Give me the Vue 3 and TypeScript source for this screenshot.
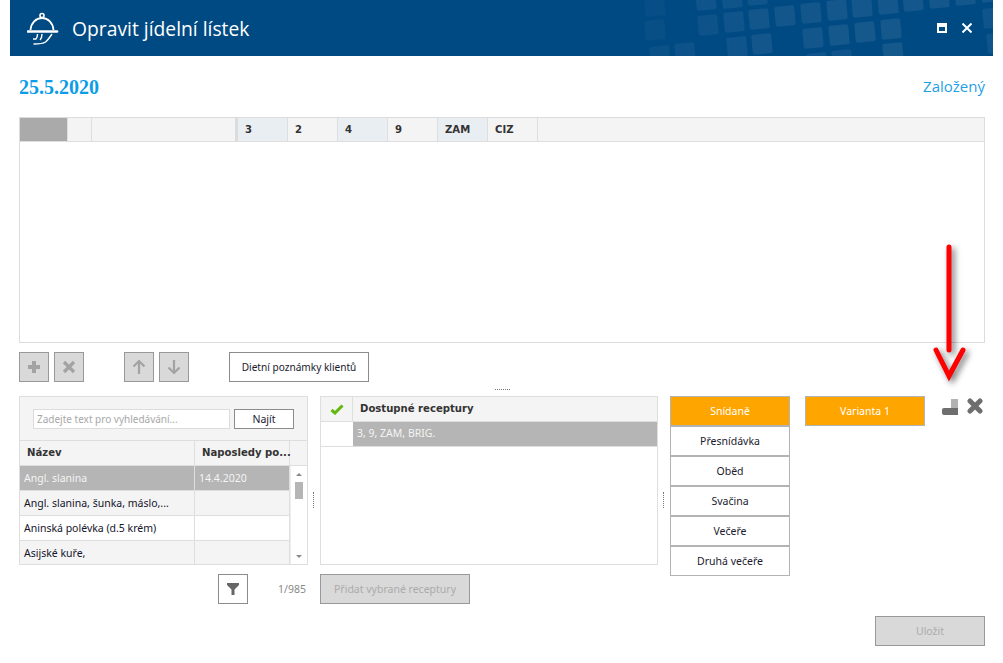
<script setup lang="ts">
interface Square { x: number; y: number; o: number }
const squares: Square[] = [
  [645,-4,.025],[645,20,.03],[650,46,.04],[675,43,.05],
  [696,-10,.06],[722,-12,.06],[747,-15,.06],
  [698,15,.05],[724,12,.06],[749,9,.07],[775,6,.07],[801,3,.07],[827,0,.075],
  [852,-3,.075],[878,-6,.075],[903,-9,.075],[929,-12,.075],[955,-15,.075],[981,-18,.075],
  [727,37,.06],[752,34,.07],[803,28,.07],[829,25,.08],[855,22,.08],[881,19,.08],
  [807,53,.06],[832,50,.06],[883,43,.08],[983,8,.06],[987,33,.06]
].map(([x, y, o]) => ({ x, y, o }))

const matrixCols = [
  { label: '3', tint: true }, { label: '2', tint: false }, { label: '4', tint: true },
  { label: '9', tint: false }, { label: 'ZAM', tint: true }, { label: 'CIZ', tint: false }
]
interface Row { name: string; date: string; cls: string }
const rows: Row[] = [
  { name: 'Angl. slanina', date: '14.4.2020', cls: 'selected' },
  { name: 'Angl. slanina, šunka, máslo,...', date: '', cls: 'alt' },
  { name: 'Aninská polévka (d.5 krém)', date: '', cls: '' },
  { name: 'Asijské kuře,', date: '', cls: 'alt' }
]
const meals = ['Snídaně', 'Přesnídávka', 'Oběd', 'Svačina', 'Večeře', 'Druhá večeře']
</script>

<template>
  <div class="page">
    <header class="titlebar">
      <svg class="bg" width="983" height="56" viewBox="10 0 983 56">
        <rect v-for="(s, i) in squares" :key="i" :x="s.x" :y="s.y" width="20" height="20" rx="2"
          fill="#fff" :fill-opacity="s.o" :transform="`rotate(-5 ${s.x + 10} ${s.y + 10})`" />
      </svg>
      <svg class="logo" width="32" height="34" viewBox="0 0 32 34" fill="none" stroke="#fff" stroke-width="1.6">
        <circle cx="15" cy="3.5" r="2" />
        <path d="M3.5 18C4 11 9 6 15 6s11 5 11.500 12" stroke-width="1.800" />
        <path d="M1 19.500h29" stroke-width="2.600" stroke-linecap="round" />
        <path d="M10.500 22c0 2-.5 4-1.500 5H6M15 22c0 2.500-.5 4.500-2 6M25 22c-2 3-4 6-6.500 8-2 1.500-7 2-12 2" stroke-width="1.400" />
      </svg>
      <h1 class="title">Opravit jídelní lístek</h1>
      <div class="winbtns">
        <svg width="10" height="10" viewBox="0 0 10 10"><path fill="#fff" fill-rule="evenodd" d="M0 0h10v10H0zM2 4v4h6V4z" /></svg>
        <svg width="10" height="10" viewBox="0 0 10 10"><path stroke="#fff" stroke-width="2" d="M.5.500l9 9M9.500.500l-9 9" /></svg>
      </div>
    </header>

    <main class="content">
      <div class="status">
        <span class="date">25.5.2020</span>
        <span class="state">Založený</span>
      </div>

      <section class="matrix">
        <div class="matrix-head">
          <div class="mh gray"></div>
          <div class="mh small"></div>
          <div class="mh wide"></div>
          <div v-for="c in matrixCols" :key="c.label" class="mh col" :class="{ tint: c.tint }">{{ c.label }}</div>
        </div>
      </section>

      <div class="toolbar">
        <button class="btn square disabled">
          <svg width="14" height="14" viewBox="0 0 14 14"><path fill="#a3a3a3" d="M5 1h4v4h4v4H9v4H5V9H1V5h4z" /></svg>
        </button>
        <button class="btn square disabled">
          <svg width="14" height="14" viewBox="0 0 14 14"><path stroke="#a3a3a3" stroke-width="3.200" d="M2 2l10 10M12 2L2 12" /></svg>
        </button>
        <button class="btn square disabled gap-big">
          <svg width="14" height="16" viewBox="0 0 14 16" fill="none"><path stroke="#a3a3a3" stroke-width="2.200" d="M7 15V2M1.500 7.500L7 2l5.500 5.500" /></svg>
        </button>
        <button class="btn square disabled">
          <svg width="14" height="16" viewBox="0 0 14 16" fill="none"><path stroke="#a3a3a3" stroke-width="2.200" d="M7 1v13M1.500 8.500L7 14l5.500-5.500" /></svg>
        </button>
        <button class="btn notes">Dietní poznámky klientů</button>
      </div>

      <div class="hsplit"><span></span></div>

      <div class="lower">
        <div class="left">
          <div class="panel search-panel">
            <div class="search">
              <div class="input">Zadejte text pro vyhledávání...</div>
              <button class="btn find">Najít</button>
            </div>
            <div class="thead">
              <div class="c-name">Název</div>
              <div class="c-date">Naposledy po...</div>
              <div class="c-sb"></div>
            </div>
            <div class="tbody">
              <div class="trows">
                <div v-for="r in rows" :key="r.name" class="tr" :class="r.cls">
                  <div class="c-name">{{ r.name }}</div>
                  <div class="c-date">{{ r.date }}</div>
                </div>
              </div>
              <div class="scrollbar">
                <i class="up"></i>
                <b class="thumb"></b>
                <i class="down"></i>
              </div>
            </div>
          </div>
          <div class="left-foot">
            <button class="btn square filter">
              <svg width="12" height="12" viewBox="0 0 12 12"><path fill="#666" d="M0 0h12v2L7.500 6.500V12h-3V6.500L0 2z" /></svg>
            </button>
            <span class="count">1/985</span>
          </div>
        </div>

        <div class="vsplit"></div>

        <div class="middle">
          <div class="panel recipes">
            <div class="rh">
              <div class="rcheck">
                <svg width="14" height="11" viewBox="0 0 14 11"><path fill="none" stroke="#62b70f" stroke-width="3" d="M1.500 6l3.500 3L12.500 1.500" /></svg>
              </div>
              <div class="rtitle">Dostupné receptury</div>
            </div>
            <div class="rr">
              <div class="rcheck-empty"></div>
              <div class="rsel">3, 9, ZAM, BRIG.</div>
            </div>
          </div>
          <button class="btn add disabled">Přidat vybrané receptury</button>
        </div>

        <div class="vsplit"></div>

        <div class="meals">
          <button v-for="(m, i) in meals" :key="m" class="btn meal" :class="{ active: i === 0 }">{{ m }}</button>
        </div>

        <div class="variants">
          <button class="btn meal active">Varianta 1</button>
        </div>

        <div class="tools">
          <svg width="16" height="17" viewBox="0 0 16 17">
            <path fill="#6e6e6e" d="M2 10h14v7H2q-2 0-2-2v-3q0-2 2-2z" />
            <path fill="#b3b3b3" d="M9 1h7v9H9z" />
          </svg>
          <svg width="16" height="16" viewBox="0 0 16 16"><path stroke="#6e6e6e" stroke-width="5" stroke-linecap="round" d="M3 3l10 10M13 3L3 13" /></svg>
        </div>
      </div>

      <div class="bottom">
        <button class="btn save disabled">Uložit</button>
      </div>
    </main>

    <svg class="annotation" width="50" height="150" viewBox="925 240 50 150" fill="none">
      <path stroke="#f00" stroke-width="5" stroke-linecap="round" d="M949 247v103" />
      <path stroke="#f00" stroke-width="5" stroke-linecap="round" d="M936 350l13 26 14-26" />
    </svg>
  </div>
</template>

<style scoped>
.page {
  position: relative;
  width: 1003px;
  height: 663px;
  box-sizing: border-box;
  padding: 0 10px;
  background: #fff;
  overflow: hidden;
  font-family: "Noto Sans", "Liberation Sans", sans-serif;
  font-size: 10.500px;
  color: #1a1a2e;
}
.titlebar {
  position: relative;
  display: flex;
  align-items: center;
  height: 56px;
  padding: 0 21px 0 17px;
  background: #004a83;
  color: #fff;
}
.bg { position: absolute; left: 0; top: 0; }
.logo { position: relative; margin-top: 1px; }
.title {
  position: relative;
  margin: 0 0 0 13px;
  font-family: "Open Sans", sans-serif;
  font-size: 19.300px;
  font-weight: 400;
}
.winbtns { position: relative; display: flex; gap: 15px; margin-left: auto; }
.content { padding: 0 8px 0 9px; }
.status {
  display: flex;
  align-items: center;
  justify-content: space-between;
  height: 61px;
  padding-top: 2px;
  box-sizing: border-box;
}
.date {
  font-family: "Liberation Serif", serif;
  font-size: 20px;
  font-weight: 700;
  color: #0b9de8;
}
.state {
  margin-top: -3px;
  font-family: "Open Sans", sans-serif;
  font-size: 15px;
  color: #1f9fe6;
}
.matrix {
  height: 226px;
  box-sizing: border-box;
  border: 1px solid #dcdcdc;
}
.matrix-head {
  display: flex;
  height: 24px;
  box-sizing: border-box;
  border-bottom: 1px solid #dedede;
  background: #f4f4f4;
}
.mh { box-sizing: border-box; border-right: 1px solid #dedede; }
.gray { width: 48px; background: #aaa; }
.small { width: 24px; }
.wide { width: 146px; border-right: 3px solid #dcdcdc; }
.col {
  width: 50px;
  padding-left: 7px;
  line-height: 23px;
  font-family: "DejaVu Sans", sans-serif;
  font-size: 10.100px;
  font-weight: 700;
  color: #333;
}
.tint { background: #e9eef2; }
.btn {
  box-sizing: border-box;
  margin: 0;
  padding: 0;
  border: 1px solid #8c8c8c;
  background: #fff;
  font: inherit;
  color: inherit;
  display: flex;
  align-items: center;
  justify-content: center;
}
.disabled { background: #d9d9d9; border-color: #999; color: #ababab; }
.square { width: 30px; height: 30px; }
.toolbar { display: flex; gap: 5px; margin-top: 9px; height: 30px; }
.gap-big { margin-left: 35px; }
.notes { width: 140px; height: 30px; margin-left: 35px; font-size: 10.100px; }
.hsplit { height: 14px; display: flex; align-items: center; justify-content: center; }
.hsplit span { width: 15px; border-top: 1px dotted #777; }
.lower {
  display: grid;
  grid-template-columns: 289px 12px 338px 12px 120px 120px 1fr;
  height: 208px;
}
.left, .middle { display: flex; flex-direction: column; }
.panel { box-sizing: border-box; height: 169px; border: 1px solid #dedede; }
.search-panel { display: flex; flex-direction: column; background: #f4f4f4; }
.search { display: flex; gap: 4px; height: 44px; padding: 12px 0 0 13px; box-sizing: border-box; border-bottom: 1px solid #dedede; }
.input {
  width: 197px;
  height: 20px;
  box-sizing: border-box;
  padding-left: 3px;
  border: 1px solid #dcdcdc;
  background: #fff;
  line-height: 18px;
  font-size: 10px;
  color: #a8a8a8;
}
.find { width: 60px; height: 20px; }
.thead {
  display: flex;
  height: 25px;
  flex: none;
  box-sizing: border-box;
  border-bottom: 1px solid #dedede;
  font-family: "DejaVu Sans", sans-serif;
  font-size: 10.100px;
  font-weight: 700;
  color: #333;
  line-height: 24px;
}
.c-name { width: 175px; flex: none; box-sizing: border-box; padding-left: 4px; border-right: 1px solid #dedede; }
.c-date { width: 95px; flex: none; box-sizing: border-box; padding-left: 4px; border-right: 1px solid #dedede; }
.thead .c-name { padding-left: 7px; }
.thead .c-date { padding-left: 7px; white-space: nowrap; }
.c-sb { flex: 1; }
.tbody { display: flex; flex: 1; min-height: 0; background: #fff; }
.trows { width: 270px; flex: none; overflow: hidden; }
.tr { display: flex; height: 25px; box-sizing: border-box; border-bottom: 1px solid #dedede; line-height: 24px; background: #fff; color: #14142b; }
.tr:last-child { border-bottom: 0; }
.tr.alt { background: #f4f4f4; }
.tr.selected { background: #b5b5b5; color: #f4f4f4; }
.tr .c-name, .tr .c-date { white-space: nowrap; }
.scrollbar {
  flex: 1;
  display: flex;
  flex-direction: column;
  align-items: center;
  padding: 7px 0 6px;
  box-sizing: border-box;
  border-left: 1px solid #eee;
}
.scrollbar i { width: 0; height: 0; border-left: 3px solid transparent; border-right: 3px solid transparent; }
.up { border-bottom: 3px solid #8a8a8a; }
.down { border-top: 3px solid #8a8a8a; margin-top: auto; }
.thumb { width: 8px; height: 17px; margin-top: 6px; background: #b5b5b5; }
.left-foot { display: flex; align-items: center; margin-top: 9px; }
.filter { margin-left: 199px; }
.count { margin-left: auto; margin-right: 2px; color: #8a8a8a; }
.vsplit { align-self: center; width: 0; height: 16px; margin-left: 5px; border-left: 1px dotted #777; }
.recipes { display: flex; flex-direction: column; }
.rh { display: flex; height: 25px; box-sizing: border-box; flex: none; border-bottom: 1px solid #dedede; background: #f4f4f4; }
.rcheck { width: 32px; flex: none; box-sizing: border-box; display: flex; align-items: center; justify-content: center; border-right: 1px solid #dedede; }
.rtitle {
  padding-left: 7px;
  font-family: "DejaVu Sans", sans-serif;
  font-size: 10.100px;
  font-weight: 700;
  color: #333;
  line-height: 24px;
}
.rr { display: flex; height: 25px; flex: none; box-sizing: border-box; border-bottom: 1px solid #dedede; }
.rcheck-empty { width: 32px; flex: none; }
.rsel { flex: 1; background: #b5b5b5; color: #f4f4f4; padding-left: 4px; line-height: 22px; }
.add { width: 150px; height: 30px; margin-top: 9px; padding-bottom: 1px; }
.meals, .variants { display: flex; flex-direction: column; }
.variants { margin-left: 15px; width: 120px; }
.meal { width: 120px; height: 30px; border-color: #b3b3b3; flex: none; padding-bottom: 1px; }
.active { background: #ffa500; color: #fff; }
.tools { display: flex; gap: 9px; margin-left: 32px; padding-top: 2px; align-items: flex-start; }
.bottom { display: flex; justify-content: flex-end; margin-top: 12px; }
.save { width: 110px; height: 30px; padding-bottom: 1px; }
.annotation { position: absolute; left: 925px; top: 240px; filter: drop-shadow(3px 3px 3px rgba(0,0,0,.55)); }
</style>

<style>
body { margin: 0; }
</style>
